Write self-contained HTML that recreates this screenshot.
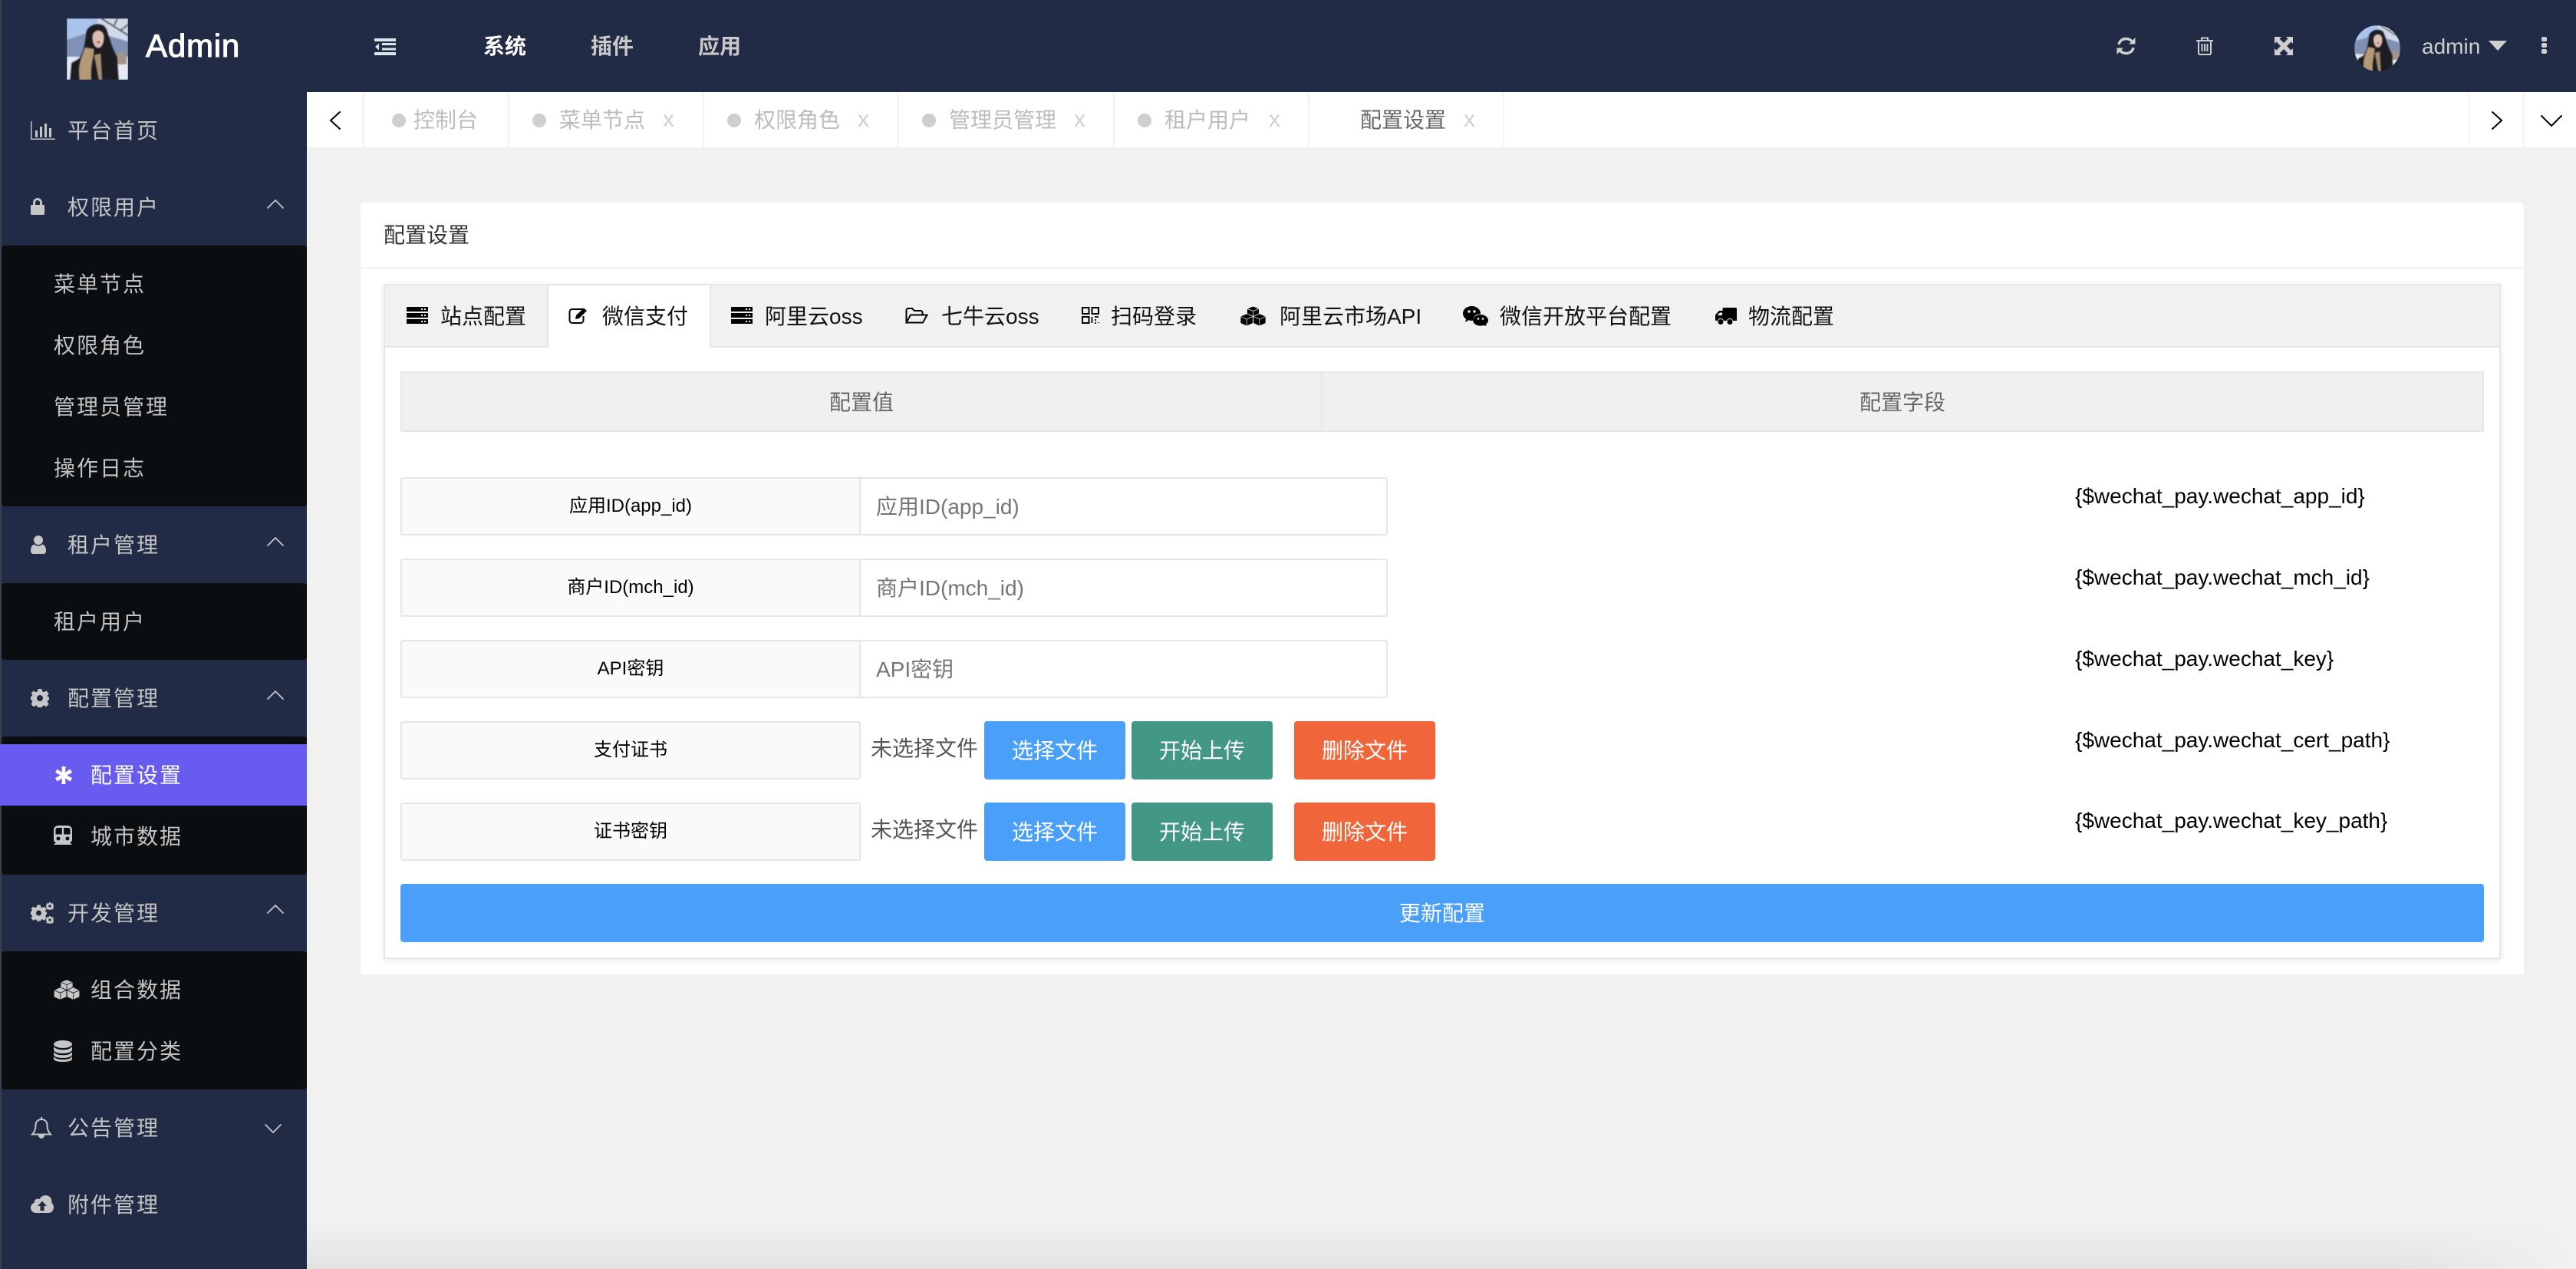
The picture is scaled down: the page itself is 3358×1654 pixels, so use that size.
<!DOCTYPE html>
<html lang="zh-CN">
<head>
<meta charset="utf-8">
<title>配置设置</title>
<style>
*{box-sizing:border-box;margin:0;padding:0}
html,body{width:3358px;height:1654px;overflow:hidden;background:#f1f1f1;font-family:"Liberation Sans","Noto Sans CJK SC",sans-serif}
.a{position:absolute}
.t{position:absolute;white-space:nowrap;line-height:40px;height:40px;font-size:28px;margin-top:1px}
.s{color:#c4c4c4;letter-spacing:2px}
.sw{color:#fff;letter-spacing:2px}
.ti{color:#bcbcbc;margin-top:0}
.x{color:#cfcfcf;font-size:30px;margin-top:0}
.dot{position:absolute;width:18px;height:18px;border-radius:50%;background:#cfcfcf;top:148px}
.bd{position:absolute;top:120px;height:72px;width:2px;background:#f3f3f3}
.tab{color:#111}
svg{position:absolute;overflow:visible}
.ln{fill:none;stroke-linecap:round;stroke-linejoin:miter}
.lab{position:absolute;left:522px;width:600px;height:76px;background:#fafafa;border:2px solid #e6e6e6;border-radius:3px;color:#000;font-size:24px;line-height:72px;text-align:center}
.inp{position:absolute;left:1120px;width:689px;height:76px;background:#fff;border:2px solid #e6e6e6;border-radius:0 3px 3px 0;color:#757575;font-size:28px;line-height:74px;padding-left:20px}
.btn{position:absolute;width:184px;height:76px;border-radius:4px;color:#fff;font-size:28px;line-height:78px;text-align:center}
.f{position:absolute;left:2705px;color:#000;font-size:28px;line-height:40px;height:40px;white-space:nowrap}
.ft{position:absolute;left:1135px;color:#555;font-size:28px;line-height:40px;height:40px;white-space:nowrap}
</style>
</head>
<body>
<svg width="0" height="0" style="position:absolute">
<defs>
<filter id="bl" x="0" y="0" width="100%" height="100%"><feGaussianBlur stdDeviation="0.9"/></filter>
<symbol id="ph" viewBox="0 0 80 80" preserveAspectRatio="none">
<g filter="url(#bl)">
<rect width="80" height="80" fill="#a9c3ea"/>
<rect x="40" width="40" height="30" fill="#cfd9ea"/>
<path d="M45 0L80 22M62 9L66 0M70 16L80 8" stroke="#57514f" stroke-width="2" fill="none"/>
<path d="M0 28L24 20L52 22L80 30V56H0z" fill="#8091b5"/>
<rect y="50" width="80" height="30" fill="#e4e9f2"/>
<path d="M63 50L70 42L78 50V60H63z" fill="#a39484"/>
<path d="M25 18C28 6 48 3 52 14C56 24 58 36 66 50L68 80H4L6 58L16 52C22 44 24 30 25 18z" fill="#1a1a24"/>
<path d="M34 22C36 14 46 14 48 22C49 30 46 38 41 38C36 38 33 30 34 22z" fill="#dcbdb1"/>
<path d="M38 30L44 30L42 33z" fill="#a33a44"/>
<path d="M24 38C20 50 14 60 17 80H32C30 60 36 50 35 40z" fill="#b49a76"/>
<path d="M36 48L42 80H46L44 46z" fill="#a58e72"/>
</g>
</symbol>
<symbol id="srv" viewBox="0 0 28 22"><path fill="currentColor" fill-rule="evenodd" d="M0 0h28v6H0zM19 2v2h2V2zM23 2v2h2V2zM0 8h28v6H0zM19 10v2h2v-2zM23 10v2h2v-2zM0 16h28v6H0zM19 18v2h2v-2zM23 18v2h2v-2z"/></symbol>
<symbol id="cubes" viewBox="0 0 36 28"><g fill="currentColor" stroke="var(--b)" stroke-width=".8" stroke-linejoin="round"><path d="M18 0L26.500 3.500V13L18 17L9.500 13V3.500z"/><path d="M18 0L26.500 3.500L18 7L9.500 3.500zM18 7V17"/><path d="M9 10.500L17.800 14.500V24L9 28L.2 24V14.500z"/><path d="M9 10.500L17.800 14.500L9 18.500L.2 14.500zM9 18.500V28"/><path d="M27 10.500L35.800 14.500V24L27 28L18.200 24V14.500z"/><path d="M27 10.500L35.800 14.500L27 18.500L18.200 14.500zM27 18.500V28"/></g></symbol>
<symbol id="cog" viewBox="0 0 24 24"><path fill="currentColor" fill-rule="evenodd" d="M9.500 0h5l.8 3.400 2 .8L20.300 2.400 23.600 6 21.700 8.800l.8 2L24 10v4l-1.500.8-.8 2 1.900 2.800-3.300 3.600-3-1.800-2 .8-.8 3.800h-5l-.8-3.800-2-.8-3 1.800L.4 19.600 2.300 16.800l-.8-2L0 14v-4l1.500-.8.8-2L.4 6 3.700 2.400l3 1.800 2-.8zM12 8a4 4 0 1 0 0 8 4 4 0 1 0 0-8z"/></symbol>
</defs>
</svg>

<!-- Header -->
<div class="a" style="left:0;top:0;width:3358px;height:120px;background:#222b45"></div>
<svg style="left:87px;top:24px" width="80" height="80"><use href="#ph" width="80" height="80"/></svg>
<div class="t" style="left:190px;top:39px;font-size:42px;line-height:40px;letter-spacing:.8px;color:#fff;-webkit-text-stroke:1.1px #fff">Admin</div>
<svg style="left:488px;top:50px" width="28" height="22" viewBox="0 0 28 22" fill="#d6e8ea"><path d="M0 0h28v4H0zM10 6h18v3H10zM10 12.500h18v3H10zM0 18h28v4H0zM6 6.500v9L1 11z"/></svg>
<div class="t" style="left:630px;top:40px;color:#fff;font-weight:700">系统</div>
<div class="t" style="left:770px;top:40px;color:#c8c8c8;font-weight:700">插件</div>
<div class="t" style="left:910px;top:40px;color:#c8c8c8;font-weight:700">应用</div>

<svg style="left:2759px;top:48px" width="25" height="24" viewBox="0 0 25 24" fill="none" stroke="#cfcfcf" stroke-width="3.400"><path d="M3 10C4 5 8 2.500 12.500 2.500C16 2.500 19 4 21 7"/><path d="M22 14C21 19 17 21.500 12.500 21.500C9 21.500 6 20 4 17"/><path d="M24.500 1V9.500H16z" fill="#cfcfcf" stroke="none"/><path d="M.5 23V14.500H9z" fill="#cfcfcf" stroke="none"/></svg>
<svg style="left:2863px;top:48px" width="22" height="24" viewBox="0 0 22 24" fill="none" stroke="#cfcfcf" stroke-width="2"><path d="M0 5h22M7 5V1.500h8V5M3 5V21.500C3 22.500 4 23 5 23H17C18 23 19 22.500 19 21.500V5M7.500 9V19M11 9V19M14.500 9V19"/></svg>
<svg style="left:2965px;top:48px" width="24" height="24" viewBox="0 0 24 24" fill="#cfcfcf"><path d="M0 0h9L6.500 2.500L12 8L17.500 2.500L15 0h9v9L21.500 6.500L16 12L21.500 17.500L24 15v9h-9L17.500 21.500L12 16L6.500 21.500L9 24H0v-9L2.500 17.500L8 12L2.500 6.500L0 9z"/></svg>
<svg style="left:3069px;top:33px" width="60" height="60"><defs><clipPath id="cc"><ellipse cx="30" cy="30" rx="30" ry="30"/></clipPath></defs><g clip-path="url(#cc)"><use href="#ph" width="60" height="60"/></g></svg>
<div class="t" style="left:3157px;top:40px;color:#cfcfcf">admin</div>
<svg style="left:3244px;top:53px" width="24" height="13" viewBox="0 0 24 13"><path fill="#cfcfcf" d="M0 0H24L12 13z"/></svg>
<svg style="left:3313px;top:48px" width="7" height="22" viewBox="0 0 7 22" fill="#cfcfcf"><rect width="7" height="6" rx="2"/><rect y="8" width="7" height="6" rx="2"/><rect y="16" width="7" height="6" rx="2"/></svg>

<!-- Sidebar -->
<div class="a" style="left:0;top:120px;width:400px;height:1534px;background:#222b45"></div>
<div class="a" style="left:0;top:0;width:2px;height:1654px;background:#3a3f4e"></div>
<div class="a" style="left:2px;top:320px;width:398px;height:340px;background:#0b0e11;border-radius:4px"></div>
<div class="a" style="left:2px;top:760px;width:398px;height:100px;background:#0b0e11;border-radius:4px"></div>
<div class="a" style="left:2px;top:960px;width:398px;height:180px;background:#0b0e11;border-radius:4px"></div>
<div class="a" style="left:2px;top:1240px;width:398px;height:180px;background:#0b0e11;border-radius:4px"></div>
<div class="a" style="left:0;top:970px;width:400px;height:80px;background:#675bf0"></div>

<svg style="left:40px;top:158px" width="32" height="24" viewBox="0 0 32 24" fill="#c6c6c6"><path d="M0 0h1.500V22.500H32V24H0z"/><path d="M6 12h3v9H6zM12 7h3v14h-3zM18 3h3v18h-3zM24 9h3v12h-3z"/></svg>
<div class="t s" style="left:88px;top:150px">平台首页</div>

<svg style="left:40px;top:258px" width="18" height="22" viewBox="0 0 18 22" fill="#c6c6c6"><path fill-rule="evenodd" d="M3 9V6C3 2.500 6 0 9 0S15 2.500 15 6V9H16.500C17.500 9 18 9.500 18 10.500V20.500C18 21.500 17.500 22 16.500 22H1.500C.5 22 0 21.500 0 20.500V10.500C0 9.500 .5 9 1.500 9zM6 9H12V6C12 4.300 10.700 3 9 3S6 4.300 6 6z"/></svg>
<div class="t s" style="left:88px;top:250px">权限用户</div>
<svg class="ln" style="left:348px;top:259px" width="22" height="13" viewBox="0 0 22 13" stroke="#c6c6c6" stroke-width="1.800"><path d="M1 12L11 2L21 12"/></svg>

<div class="t s" style="left:70px;top:350px">菜单节点</div>
<div class="t s" style="left:70px;top:430px">权限角色</div>
<div class="t s" style="left:70px;top:510px">管理员管理</div>
<div class="t s" style="left:70px;top:590px">操作日志</div>

<svg style="left:40px;top:698px" width="20" height="24" viewBox="0 0 20 24" fill="#c6c6c6"><circle cx="10" cy="6" r="6"/><path d="M0 20C0 15 2 12 5 11.500C6.500 13 8 13.500 10 13.500S13.500 13 15 11.500C18 12 20 15 20 20C20 22.500 18.500 24 16.500 24H3.500C1.500 24 0 22.500 0 20z"/></svg>
<div class="t s" style="left:88px;top:690px">租户管理</div>
<svg class="ln" style="left:348px;top:699px" width="22" height="13" viewBox="0 0 22 13" stroke="#c6c6c6" stroke-width="1.800"><path d="M1 12L11 2L21 12"/></svg>

<div class="t s" style="left:70px;top:790px">租户用户</div>

<svg style="left:40px;top:898px;color:#c6c6c6" width="24" height="24"><use href="#cog" width="24" height="24"/></svg>
<div class="t s" style="left:88px;top:890px">配置管理</div>
<svg class="ln" style="left:348px;top:899px" width="22" height="13" viewBox="0 0 22 13" stroke="#c6c6c6" stroke-width="1.800"><path d="M1 12L11 2L21 12"/></svg>

<svg style="left:72px;top:999px" width="22" height="23" viewBox="0 0 22 23" fill="#fff"><path d="M8.500 0h5l-.4 7.600L19.500 3.500 22 8l-6.800 3.500L22 15l-2.500 4.500-6.400-4.100.4 7.600h-5l.4-7.600-6.400 4.100L0 15l6.800-3.500L0 8l2.500-4.500 6.400 4.100z"/></svg>
<div class="t sw" style="left:118px;top:990px">配置设置</div>

<svg style="left:70px;top:1076px" width="24" height="25" viewBox="0 0 24 25" fill="#c6c6c6"><path fill-rule="evenodd" d="M6 0H18C21.500 0 24 2.500 24 6V18C24 20 23 21.500 21 22L24 25H0L3 22C1 21.500 0 20 0 18V6C0 2.500 2.500 0 6 0zM5 3C3.500 3 2.500 4 2.500 5.500V11.500H10.800V3zM13.200 3V11.500H21.500V5.500C21.500 4 20.500 3 19 3zM6 14.500a2.500 2.500 0 1 0 0 5 2.500 2.500 0 1 0 0-5zM18 14.500a2.500 2.500 0 1 0 0 5 2.500 2.500 0 1 0 0-5z"/></svg>
<div class="t s" style="left:118px;top:1070px">城市数据</div>

<svg style="left:40px;top:1176px;color:#c6c6c6" width="30" height="28"><use href="#cog" x="0" y="3.500" width="21" height="21"/><use href="#cog" x="20" y="0" width="10" height="10"/><use href="#cog" x="20" y="18" width="10" height="10"/></svg>
<div class="t s" style="left:88px;top:1170px">开发管理</div>
<svg class="ln" style="left:348px;top:1178px" width="22" height="13" viewBox="0 0 22 13" stroke="#c6c6c6" stroke-width="1.800"><path d="M1 12L11 2L21 12"/></svg>

<svg style="left:70px;top:1276px;color:#c6c6c6;--b:#0b0e11" width="34" height="28"><use href="#cubes" width="34" height="28"/></svg>
<div class="t s" style="left:118px;top:1270px">组合数据</div>

<svg style="left:70px;top:1356px" width="24" height="28" viewBox="0 0 24 28" fill="#c6c6c6"><ellipse cx="12" cy="5" rx="12" ry="5"/><path d="M0 8C2 11 6 12.300 12 12.300S22 11 24 8V12C24 15 19 17 12 17S0 15 0 12z"/><path d="M0 15C2 18 6 19.300 12 19.300S22 18 24 15V18.500C24 21 19 23 12 23S0 21 0 18.500z"/><path d="M0 21C2 24 6 25 12 25S22 24 24 21V24C24 26.500 19 28 12 28S0 26.500 0 24z"/></svg>
<div class="t s" style="left:118px;top:1350px">配置分类</div>

<svg style="left:41px;top:1456px" width="26" height="28" viewBox="0 0 26 28" fill="none" stroke="#c6c6c6" stroke-width="2"><path d="M13 3C8 3 5.500 6.500 5.500 10.500C5.500 17 3.500 20 1 22.500H25C22.500 20 20.500 17 20.500 10.500C20.500 6.500 18 3 13 3z"/><path d="M13 0V3"/><path d="M10 23.500C10 25.500 11.300 27 13 27S16 25.500 16 23.500" fill="#c6c6c6"/></svg>
<div class="t s" style="left:88px;top:1450px">公告管理</div>
<svg class="ln" style="left:345px;top:1465px" width="22" height="13" viewBox="0 0 22 13" stroke="#c6c6c6" stroke-width="1.800"><path d="M1 1L11 11L21 1"/></svg>

<svg style="left:40px;top:1558px" width="30" height="23" viewBox="0 0 30 23"><path fill="#c6c6c6" fill-rule="evenodd" d="M7 23C3 23 0 20 0 16.300C0 13 2 10.500 4.800 9.800C4.800 9.500 4.700 9.200 4.700 9C4.700 6.500 6.700 4.500 9.200 4.500C10 4.500 10.800 4.700 11.500 5.100C13 2 16 0 19.500 0C24 0 27.500 3.500 27.500 8C27.500 8.600 27.400 9.200 27.300 9.700C29 11 30 13.200 30 15.500C30 19.700 27 23 23 23zM15 7.500L9 14H12.500V20H17.500V14H21z"/></svg>
<div class="t s" style="left:88px;top:1550px">附件管理</div>

<!-- Tab bar -->
<div class="a" style="left:400px;top:120px;width:2958px;height:72px;background:#fff"></div>
<div class="bd" style="left:472px"></div><div class="bd" style="left:662px"></div><div class="bd" style="left:916px"></div><div class="bd" style="left:1170px"></div><div class="bd" style="left:1451px"></div><div class="bd" style="left:1705px"></div><div class="bd" style="left:1959px"></div><div class="bd" style="left:3218px"></div><div class="bd" style="left:3288px"></div>
<svg class="ln" style="left:429px;top:145px" width="15" height="24" viewBox="0 0 15 24" stroke="#000" stroke-width="2"><path d="M14 1L2 12L14 23"/></svg>
<svg class="ln" style="left:3248px;top:145px" width="14" height="24" viewBox="0 0 14 24" stroke="#000" stroke-width="2"><path d="M1 1L13 12L1 23"/></svg>
<svg class="ln" style="left:3312px;top:150px" width="28" height="15" viewBox="0 0 28 15" stroke="#000" stroke-width="2"><path d="M1 1L14 14L27 1"/></svg>

<div class="dot" style="left:511px"></div><div class="t ti" style="left:539px;top:137px">控制台</div>
<div class="dot" style="left:694px"></div><div class="t ti" style="left:729px;top:137px">菜单节点</div><div class="t x" style="left:864px;top:136px">x</div>
<div class="dot" style="left:948px"></div><div class="t ti" style="left:983px;top:137px">权限角色</div><div class="t x" style="left:1118px;top:136px">x</div>
<div class="dot" style="left:1202px"></div><div class="t ti" style="left:1237px;top:137px">管理员管理</div><div class="t x" style="left:1400px;top:136px">x</div>
<div class="dot" style="left:1483px"></div><div class="t ti" style="left:1518px;top:137px">租户用户</div><div class="t x" style="left:1654px;top:136px">x</div>
<div class="t ti" style="left:1773px;top:137px;color:#666">配置设置</div><div class="t x" style="left:1908px;top:136px">x</div>

<!-- Card -->
<div class="a" style="left:470px;top:264px;width:2820px;height:1006px;background:#fff;border-radius:4px"></div>
<div class="a" style="left:470px;top:348px;width:2820px;height:2px;background:#f3f3f3"></div>
<div class="t" style="left:500px;top:286px;color:#333">配置设置</div>

<!-- Tab panel -->
<div class="a" style="left:500px;top:370px;width:2760px;height:880px;background:#fff;border:2px solid #e6e6e6;box-shadow:0 2px 8px rgba(0,0,0,.09)"></div>
<div class="a" style="left:502px;top:372px;width:2756px;height:81px;background:#f1f1f1;border-bottom:2px solid #e6e6e6"></div>
<div class="a" style="left:713px;top:372px;width:214px;height:81px;background:#fff;border-left:2px solid #e6e6e6;border-right:2px solid #e6e6e6"></div>

<svg style="left:530px;top:400px;color:#000" width="28" height="22"><use href="#srv" width="28" height="22"/></svg>
<div class="t tab" style="left:574px;top:392px">站点配置</div>
<svg style="left:741px;top:400px" width="28" height="22" viewBox="0 0 28 22" fill="none" stroke="#000" stroke-width="2"><path d="M19 3H5C3 3 1.500 4.500 1.500 6.500V17C1.500 19.500 3 21 5 21H16C18 21 19.500 19.500 19.500 17V12"/><path d="M10 11L20 1.500L24 5L14 15L9 16z" fill="#000" stroke="none"/></svg>
<div class="t tab" style="left:785px;top:392px">微信支付</div>
<svg style="left:953px;top:400px;color:#000" width="28" height="22"><use href="#srv" width="28" height="22"/></svg>
<div class="t tab" style="left:997px;top:392px">阿里云oss</div>
<svg style="left:1180px;top:401px" width="30" height="21" viewBox="0 0 30 21" fill="none" stroke="#000" stroke-width="2"><path d="M1.500 18V3.500C1.500 2 2.500 1 4 1H9L12 4H20C21.500 4 22.500 5 22.500 6.500V9"/><path d="M1.500 19.500L7 9.500H28.500L23 19.500z"/></svg>
<div class="t tab" style="left:1227px;top:392px">七牛云oss</div>
<svg style="left:1410px;top:400px" width="23" height="22" viewBox="0 0 23 22" fill="none" stroke="#000" stroke-width="2"><rect x="1" y="1" width="8.500" height="8"/><rect x="13.500" y="1" width="8.500" height="8"/><rect x="1" y="13" width="8.500" height="8"/><path d="M13.500 13v8M17 13h5M17 17h2M17 21h2M22 20v1" stroke-width="1.800"/></svg>
<div class="t tab" style="left:1448px;top:392px">扫码登录</div>
<svg style="left:1616px;top:399px;color:#000;--b:#f1f1f1" width="35" height="26"><use href="#cubes" width="35" height="26"/></svg>
<div class="t tab" style="left:1668px;top:392px">阿里云市场API</div>
<svg style="left:1907px;top:399px" width="33" height="26" viewBox="0 0 33 26"><path d="M11.500 0C17.500 0 23 4 23 9.500C23 9.700 23 10 22.900 10.200C17 10 13 14 13 18.500L11.500 19C10 19 8.500 18.600 7.500 18.300L3 21L4.200 17C1.500 15 0 12.500 0 9.500C0 4 5.500 0 11.500 0z"/><path d="M23 11C28.500 11 33 14.500 33 18.500C33 20.800 31.500 22.500 29.800 24L31 26L27 25C25.500 25.400 24.300 25.700 23 25.700C17.500 25.700 13 22.500 13 18.500S17.500 11 23 11z"/><circle cx="8" cy="7" r="1.700" fill="#f1f1f1"/><circle cx="15" cy="7" r="1.700" fill="#f1f1f1"/><circle cx="20" cy="16.500" r="1.300" fill="#f1f1f1"/><circle cx="26" cy="16.500" r="1.300" fill="#f1f1f1"/></svg>
<div class="t tab" style="left:1955px;top:392px">微信开放平台配置</div>
<svg style="left:2236px;top:401px" width="28" height="22" viewBox="0 0 28 22"><path d="M11 0H26.500C27.500 0 28 .5 28 1.500V17H22.800C22.300 15 20.500 14 19 14S15.500 15 15 17H10.800C10.300 15 8.500 14 7 14S3.500 15 3.200 17H1C.3 17 0 16.500 0 16V9.500L5 4H9.500V1.500C9.500 .5 10 0 11 0z"/><path d="M6 6.500L2.500 10H9V6.500z" fill="#f1f1f1"/><circle cx="7" cy="18.500" r="3.500"/><circle cx="19" cy="18.500" r="3.500"/></svg>
<div class="t tab" style="left:2279px;top:392px">物流配置</div>

<!-- Table header -->
<div class="a" style="left:522px;top:484px;width:2716px;height:79px;background:#f0f0f0;border:2px solid #e6e6e6"></div>
<div class="a" style="left:1722px;top:486px;width:2px;height:75px;background:#e6e6e6"></div>
<div class="t" style="left:1081px;top:504px;color:#666">配置值</div>
<div class="t" style="left:2424px;top:504px;color:#666">配置字段</div>

<!-- Rows -->
<div class="lab" style="top:622px">应用ID(app_id)</div>
<div class="inp" style="top:622px">应用ID(app_id)</div>
<div class="f" style="top:627px">{$wechat_pay.wechat_app_id}</div>

<div class="lab" style="top:728px">商户ID(mch_id)</div>
<div class="inp" style="top:728px">商户ID(mch_id)</div>
<div class="f" style="top:733px">{$wechat_pay.wechat_mch_id}</div>

<div class="lab" style="top:834px">API密钥</div>
<div class="inp" style="top:834px">API密钥</div>
<div class="f" style="top:839px">{$wechat_pay.wechat_key}</div>

<div class="lab" style="top:940px">支付证书</div>
<div class="ft" style="top:956px">未选择文件</div>
<div class="btn" style="left:1283px;top:940px;background:#4a9ff9">选择文件</div>
<div class="btn" style="left:1475px;top:940px;background:#429787">开始上传</div>
<div class="btn" style="left:1687px;top:940px;background:#f0653a">删除文件</div>
<div class="f" style="top:945px">{$wechat_pay.wechat_cert_path}</div>

<div class="lab" style="top:1046px">证书密钥</div>
<div class="ft" style="top:1062px">未选择文件</div>
<div class="btn" style="left:1283px;top:1046px;background:#4a9ff9">选择文件</div>
<div class="btn" style="left:1475px;top:1046px;background:#429787">开始上传</div>
<div class="btn" style="left:1687px;top:1046px;background:#f0653a">删除文件</div>
<div class="f" style="top:1050px">{$wechat_pay.wechat_key_path}</div>

<div class="btn" style="left:522px;top:1152px;width:2716px;background:#4a9ff9">更新配置</div>

<!-- Bottom fade -->
<div class="a" style="left:400px;top:1590px;width:2958px;height:64px;background:linear-gradient(to bottom,rgba(0,0,0,0),rgba(0,0,0,.06));-webkit-mask-image:linear-gradient(to right,#000 92%,transparent 100%);mask-image:linear-gradient(to right,#000 92%,transparent 100%)"></div>
</body>
</html>
